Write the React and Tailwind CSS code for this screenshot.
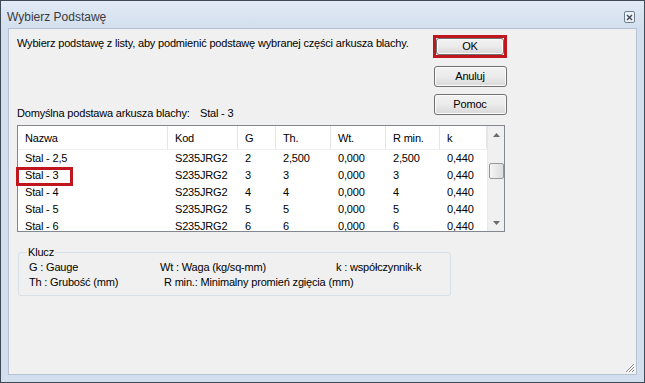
import React from 'react';

const rows = [
    { name: 'Stal - 2,5', kod: 'S235JRG2', g: '2', th: '2,500', wt: '0,000', r: '2,500', k: '0,440' },
    { name: 'Stal - 3', kod: 'S235JRG2', g: '3', th: '3', wt: '0,000', r: '3', k: '0,440' },
    { name: 'Stal - 4', kod: 'S235JRG2', g: '4', th: '4', wt: '0,000', r: '4', k: '0,440' },
    { name: 'Stal - 5', kod: 'S235JRG2', g: '5', th: '5', wt: '0,000', r: '5', k: '0,440' },
    { name: 'Stal - 6', kod: 'S235JRG2', g: '6', th: '6', wt: '0,000', r: '6', k: '0,440' },
];

const cols = [
    { key: 'name', label: 'Nazwa', w: 'w-[150px]' },
    { key: 'kod', label: 'Kod', w: 'w-[70px]' },
    { key: 'g', label: 'G', w: 'w-[38px]' },
    { key: 'th', label: 'Th.', w: 'w-[55px]' },
    { key: 'wt', label: 'Wt.', w: 'w-[55px]' },
    { key: 'r', label: 'R min.', w: 'w-[54px]' },
    { key: 'k', label: 'k', w: 'w-[47px]' },
];

function WinButton({ children, className = '' }) {
    return (
        <div className={`flex items-center justify-center rounded-[3px] border border-[#707070] bg-gradient-to-b from-[#f2f2f2] via-[#ebebeb] to-[#d8d8d8] shadow-[inset_0_0_0_1px_#fcfcfc] ${className}`}>
            {children}
        </div>
    );
}

function Arrow({ up }) {
    return (
        <svg width="7" height="4" viewBox="0 0 7 4">
            <path d={up ? 'M0 4 L3.5 0 L7 4 Z' : 'M0 0 L3.5 4 L7 0 Z'} fill="#6b6b6b" />
        </svg>
    );
}

export default function App() {
    return (
        <div
            className="w-[645px] h-[383px] flex flex-col border border-[#3f4a57] bg-[#d3dfee] text-[11px] tracking-[-0.18px] text-black"
            style={{ fontFamily: '"Liberation Sans", Arial, sans-serif' }}
        >
            {/* title bar */}
            <div className="h-[27px] flex items-center justify-between pl-[6px] pr-[9px] bg-gradient-to-b from-[#e2eaf5] to-[#d3dfee]">
                <span className="text-[12px] tracking-normal text-[#3a3a3a] mt-[5px]">Wybierz Podstawę</span>
                <div className="mt-[5px] w-[11px] h-[12px] border border-[#6f7f92] rounded-[2px] bg-[#eef2f7] flex items-center justify-center">
                    <svg width="7" height="7" viewBox="0 0 7 7">
                        <path d="M1 1 L6 6 M6 1 L1 6" stroke="#3d4755" strokeWidth="1.4" />
                    </svg>
                </div>
            </div>

            {/* content */}
            <div className="flex-1 mx-[7px] mb-[7px] border border-[#b4c2d3] bg-[#f0f0f0] relative">
                <div className="pl-[8px] pt-[6px] w-[498px]">
                    <div className="flex h-[85px]">
                        <div className="flex-1 flex flex-col justify-between">
                            <div className="leading-[14px] mt-[1px]">
                                Wybierz podstawę z listy, aby podmienić podstawę wybranej części arkusza blachy.
                            </div>
                            <div className="leading-[14px]">
                                <span className="inline-block w-[183px]">Domyślna podstawa arkusza blachy:</span>
                                <span>Stal - 3</span>
                            </div>
                        </div>
                        <div className="w-[74px] flex flex-col items-center">
                            <div className="w-[74px] h-[23px] border-[3px] border-[#c0161e]">
                                <WinButton className="w-full h-full">OK</WinButton>
                            </div>
                            <WinButton className="mt-[8px] w-[73px] h-[21px]">Anuluj</WinButton>
                            <WinButton className="mt-[7px] w-[73px] h-[21px]">Pomoc</WinButton>
                        </div>
                    </div>

                    {/* list view */}
                    <div className="relative mt-[5px] w-[488px] h-[107px] border border-[#828790] bg-white flex">
                        <div className="w-[469px] h-full overflow-hidden">
                            <div className="flex h-[24px] border-b border-[#eef0f3]">
                                {cols.map(c => (
                                    <div key={c.key} className={`${c.w} shrink-0 pl-[7px] pt-[2px] flex items-center border-r border-[#e5e5e5]`}>
                                        {c.label}
                                    </div>
                                ))}
                            </div>
                            {rows.map(r => (
                                <div key={r.name} className="flex h-[17px] items-center">
                                    {cols.map(c => (
                                        <div key={c.key} className={`${c.w} shrink-0 pl-[7px]`}>{r[c.key]}</div>
                                    ))}
                                </div>
                            ))}
                        </div>
                        <div className="w-[17px] h-full bg-[#f0f0f0] border-l border-[#e8e8e8] flex flex-col items-center">
                            <div className="h-[17px] flex items-center justify-center"><Arrow up /></div>
                            <div className="mt-[20px] w-[15px] h-[16px] rounded-[2px] border border-[#979797] bg-gradient-to-r from-[#f5f5f5] to-[#dcdcdc]" />
                            <div className="mt-auto h-[17px] flex items-center justify-center"><Arrow /></div>
                        </div>
                        {/* highlight around selected row */}
                        <div className="absolute left-[-2px] top-[41px] w-[57px] h-[19px] border-[3px] border-[#c0161e]" />
                    </div>

                    {/* key group box */}
                    <div className="relative mt-[20px] ml-[1px] w-[433px] border border-[#d5dfe5] rounded-[3px] pl-[10px] pt-[7px] pb-[5px] leading-[15px]">
                        <span className="absolute -top-[8px] left-[8px] bg-[#f0f0f0] px-[1px]">Klucz</span>
                        <div className="flex">
                            <span className="w-[131px]">G : Gauge</span>
                            <span className="w-[176px]">Wt : Waga (kg/sq-mm)</span>
                            <span>k : współczynnik-k</span>
                        </div>
                        <div className="flex">
                            <span className="w-[135px]">Th : Grubość (mm)</span>
                            <span>R min.: Minimalny promień zgięcia (mm)</span>
                        </div>
                    </div>
                </div>

                {/* resize grip */}
                <svg className="absolute right-[1px] bottom-[1px]" width="12" height="12" viewBox="0 0 12 12">
                    <path d="M11 3 L3 11 M11 6 L6 11 M11 9 L9 11" stroke="#8a8a8a" strokeWidth="1" />
                    <path d="M12 4 L4 12 M12 7 L7 12" stroke="#ffffff" strokeWidth="1" />
                </svg>
            </div>
        </div>
    );
}
